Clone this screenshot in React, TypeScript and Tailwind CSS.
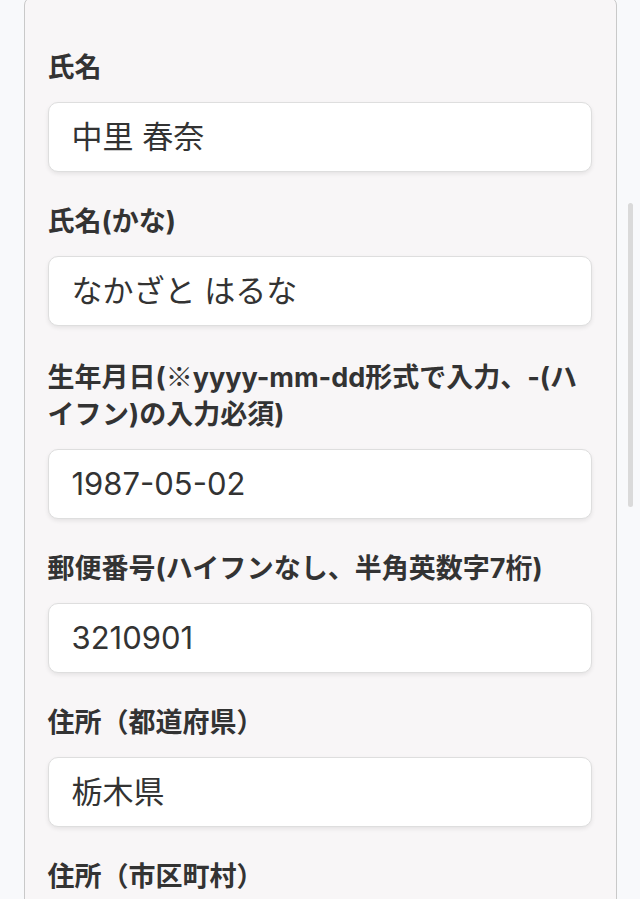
import React from "react";

const fields: { label: React.ReactNode; value: string }[] = [
  { label: "氏名", value: "中里 春奈" },
  { label: "氏名(かな)", value: "なかざと はるな" },
  {
    label: (
      <>
        生年月日(<span className="font-['Noto_Sans_CJK_JP',sans-serif]">※</span>yyyy-mm-dd形式で入力、-(ハイフン)の入力必須)
      </>
    ),
    value: "1987-05-02",
  },
  { label: "郵便番号(ハイフンなし、半角英数字7桁)", value: "3210901" },
  { label: "住所（都道府県）", value: "栃木県" },
  { label: "住所（市区町村）", value: "" },
];

const App: React.FC = () => {
  return (
    <div className="relative w-[640px] h-[899px] overflow-hidden bg-[#f8f9fb] font-['Inter','Noto_Sans_CJK_JP',sans-serif] text-[#333]">
      {/* Form card */}
      <div className="ml-6 mr-[23px] -mt-[3px] rounded-lg border-[1.5px] border-[#c9c9c9] bg-[#f8f6f7] pl-[22.5px] pr-6 pt-[51px] pb-10">
        <div className="flex flex-col gap-[31px]">
          {fields.map((f, i) => (
            <div key={i} className="flex flex-col gap-4">
              <label className="text-[27px] leading-[37px] font-bold text-[#333]">
                {f.label}
              </label>
              <div className="flex h-[70px] items-center rounded-[10px] border border-[#dedede] bg-white pl-[23px] text-[31px] text-[#333] shadow-[0_2px_4px_rgba(0,0,0,0.08)]">
                {f.value}
              </div>
            </div>
          ))}
        </div>
      </div>

      {/* Scrollbar thumb */}
      <div className="absolute left-[628px] top-[203px] h-[304px] w-[5px] rounded-full bg-[#dadada]" />
    </div>
  );
};

export default App;
